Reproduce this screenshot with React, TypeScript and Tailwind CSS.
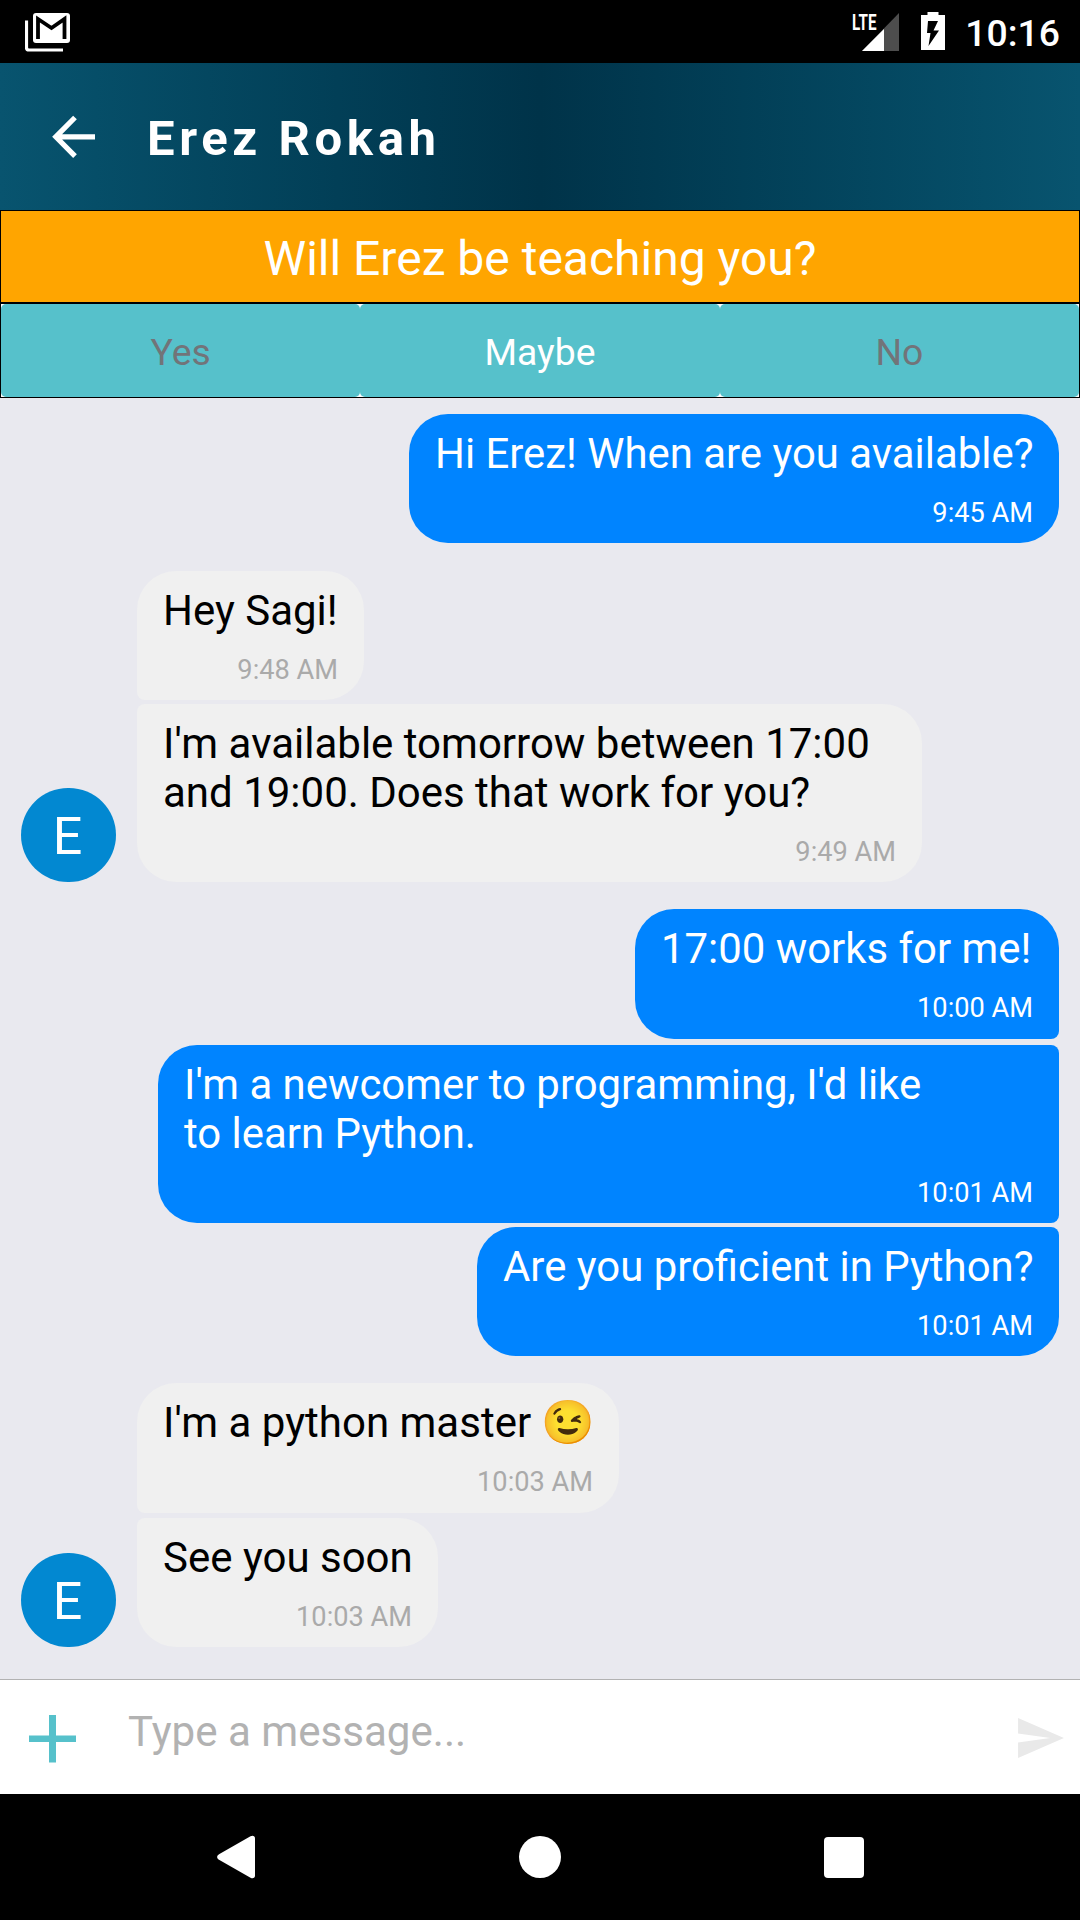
type Message = {
  lines: string[];
  emoji?: string;
  time: string;
  box: string;
  mine?: boolean;
  avatar?: boolean;
};

const messages: Message[] = [
  { lines: ['Hi Erez! When are you available?'], time: '9:45 AM', mine: true, box: 'w-[650px] h-[129px] rounded-[39px]' },
  { lines: ['Hey Sagi!'], time: '9:48 AM', box: 'mt-[28px] w-[227px] h-[129px] rounded-[39px] rounded-bl-[8px]' },
  {
    lines: ["I'm available tomorrow between 17:00", 'and 19:00. Does that work for you?'],
    time: '9:49 AM',
    avatar: true,
    box: 'mt-[4px] w-[785px] h-[178px] rounded-[39px] rounded-tl-[8px]',
  },
  { lines: ['17:00 works for me!'], time: '10:00 AM', mine: true, box: 'mt-[27px] w-[424px] h-[130px] rounded-[39px] rounded-br-[8px]' },
  {
    lines: ["I'm a newcomer to programming, I'd like", 'to learn Python.'],
    time: '10:01 AM',
    mine: true,
    box: 'mt-[6px] w-[901px] h-[178px] rounded-[39px] rounded-r-[8px]',
  },
  { lines: ['Are you proficient in Python?'], time: '10:01 AM', mine: true, box: 'mt-[4px] w-[582px] h-[129px] rounded-[39px] rounded-tr-[8px]' },
  { lines: ["I'm a python master "], emoji: '😉', time: '10:03 AM', box: 'mt-[27px] w-[482px] h-[130px] rounded-[39px] rounded-bl-[8px]' },
  { lines: ['See you soon'], time: '10:03 AM', avatar: true, box: 'mt-[5px] w-[301px] h-[129px] rounded-[39px] rounded-tl-[8px]' },
];

function StatusBar() {
  return (
    <div className="flex h-[63px] shrink-0 items-start bg-black pl-[25px] text-white">
      <svg className="mt-[12px] h-[40px] w-[46px]" viewBox="0 0 46 40" fill="none">
        <path d="M1.500 8.500v27a2.500 2.500 0 0 0 2.500 2.500h34" stroke="#fff" strokeWidth="3.200" />
        <rect x="8" y="1" width="37" height="30" rx="3" fill="#fff" />
        <path d="M13 27V7l13.500 9L39.500 7v20" stroke="#000" strokeWidth="3.800" />
      </svg>
      <svg className="mt-[12px] ml-auto h-[40px] w-[48px] overflow-visible" viewBox="0 0 48 40">
        <path d="M47 1v38H10z" fill="#4d4d4d" />
        <path d="M32 17v22H10z" fill="#fff" />
        <path d="M0 0h27v19H0z" fill="#000" />
        <text x="0" y="18" textLength="24.500" lengthAdjust="spacingAndGlyphs" fontSize="22.500" fontWeight="700" fill="#fff">LTE</text>
      </svg>
      <svg className="mt-[12px] ml-[21px] h-[39px] w-[24px]" viewBox="0 0 24 39">
        <path d="M6.500 0h11v3H24v35H0V3h6.500z" fill="#fff" />
        <path d="M7 9h10l-4.500 9.500H18L7.500 34 9.500 21H6z" fill="#000" />
      </svg>
      <span className="mt-[11px] mr-[20px] ml-[20px] text-[37.3px] leading-[44px] font-medium">10:16</span>
    </div>
  );
}

function Header() {
  return (
    <header className="flex h-[147px] shrink-0 items-center bg-linear-to-r from-[#08546f] via-[#003349] to-[#08546f] pl-[52px] text-white">
      <svg className="h-[44px] w-[44px]" viewBox="0 0 44 44" fill="none" stroke="#fff" strokeWidth="5.200">
        <path d="M23 2.500 3.800 21.800 23 41.200M4 21.800h39" />
      </svg>
      <h1 className="ml-[51px] pt-[4px] text-[49px] leading-[58px] font-bold tracking-[4.6px]">Erez Rokah</h1>
    </header>
  );
}

function Poll() {
  return (
    <section className="shrink-0 text-center">
      <div className="h-[93px] border border-black bg-[#ffa500] pt-[20px] text-[48px] leading-[56px] text-white">Will Erez be teaching you?</div>
      <div className="grid h-[95px] grid-cols-3 border border-black bg-white text-[37.3px] text-white">
        {['Yes', 'Maybe', 'No'].map((label) => (
          <button key={label} className={`rounded-[5px] bg-[#56c1cb] pt-[4px] ${label === 'Maybe' ? 'text-white' : 'text-[#727479]'}`}>
            {label}
          </button>
        ))}
      </div>
    </section>
  );
}

function MessageRow({ m }: { m: Message }) {
  return (
    <div className={`flex items-end ${m.mine ? 'justify-end pr-[21px]' : 'pl-[21px]'}`}>
      {!m.mine && (
        <div className="mr-[21px] w-[95px]">
          {m.avatar && (
            <div className="flex h-[94px] w-[95px] items-center justify-center rounded-full bg-[#0288d1] pt-[3px] pr-[2px] text-[52px] text-white">E</div>
          )}
        </div>
      )}
      <div className={`flex flex-col px-[26px] pt-[15px] ${m.box} ${m.mine ? 'bg-[#0084ff] text-[41.9px] text-white' : 'bg-[#f0f0f0] text-[42px] text-black'}`}>
        {m.lines.map((line) => (
          <p key={line} className="h-[49px] leading-[49px] whitespace-pre">
            {line}
            {m.emoji && <span className="-ml-[1px] text-[43px] leading-none">{m.emoji}</span>}
          </p>
        ))}
        <time className={`mt-[19px] self-end text-[27.2px] leading-[32px] whitespace-nowrap ${m.mine ? 'text-white' : 'text-[#aaaaaa]'}`}>{m.time}</time>
      </div>
    </div>
  );
}

export default function App() {
  return (
    <div className="flex h-[1920px] w-[1080px] flex-col overflow-hidden bg-[#e9e9ef] font-['Roboto',sans-serif]">
      <StatusBar />
      <Header />
      <Poll />
      <main className="flex-1 pt-[16px]">
        {messages.map((m) => (
          <MessageRow key={m.lines[0]} m={m} />
        ))}
      </main>
      <footer className="flex h-[115px] shrink-0 border-t border-[#b2b2b2] bg-white">
        <svg className="mt-[35px] ml-[29px] h-[48px] w-[47px]" viewBox="0 0 47 48" fill="#56c1cb">
          <path d="M20 0h7v20.500h20V27H27v20.500h-7V27H0v-6.500h20z" />
        </svg>
        <span className="mt-[27px] ml-[52px] text-[42.1px] leading-[49px] text-[#b2b2b2]">Type a message...</span>
        <svg className="mt-[38px] mr-[16px] ml-auto h-[41px] w-[46px]" viewBox="0 0 47 42" fill="#e9e9e9">
          <path d="M0 0l47 20.500L0 41V25l33-4.500L0 16z" />
        </svg>
      </footer>
      <nav className="flex h-[126px] shrink-0 items-center bg-black pl-[217px]">
        <svg className="h-[44px] w-[38px]" viewBox="0 0 38 44">
          <path d="M33.500 1.200C36 0 38 1 38 3.500v37c0 2.500-2 3.500-4.500 2.300L2 24.800C-.5 23.200-.5 20.800 2 19.200z" fill="#fff" />
        </svg>
        <div className="ml-[264px] h-[42px] w-[42px] rounded-full bg-white" />
        <div className="ml-[263px] h-[41px] w-[40px] rounded-[4px] bg-white" />
      </nav>
    </div>
  );
}
